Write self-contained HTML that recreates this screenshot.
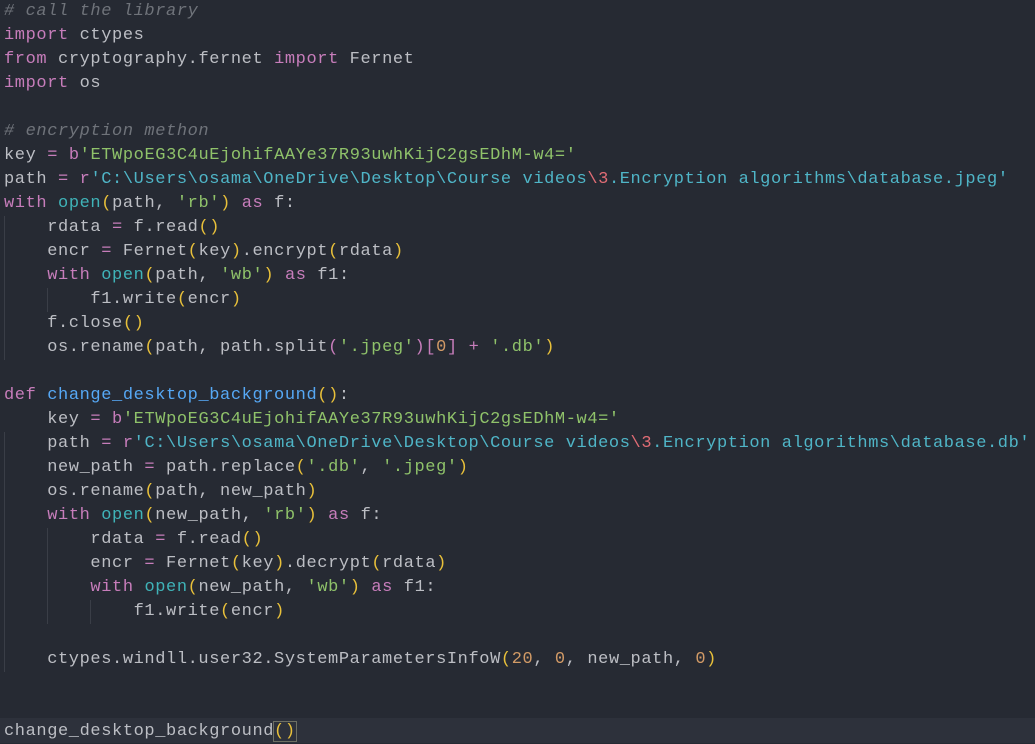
<!DOCTYPE html>
<html><head><meta charset="utf-8"><style>
html,body{margin:0;padding:0;background:#262a33;width:1035px;height:743px;overflow:hidden}
.c{position:absolute;left:4px;top:0px;font-family:"Liberation Mono",monospace;font-size:17px;letter-spacing:0.6px;line-height:24px;color:#bcbec4;white-space:pre}
.cur{position:absolute;left:0;top:718px;width:1035px;height:25px;background:#2d313b}
.g{position:absolute;width:1px;background:#3a3e47}
.cm{color:#6f737a;font-style:italic}
.k{color:#c77dbb}
.s{color:#8fc26a}
.p{color:#4fb5c7}
.e{color:#e06c75}
.f{color:#56a8f5}
.b{color:#3fb3b8}
.y{color:#e8c03a}
.n{color:#d19a66}
.m{outline:1px solid #6d6f63}
</style></head><body>
<div class="cur"></div>
<div class="g" style="left:4px;top:216px;height:144px"></div>
<div class="g" style="left:47px;top:288px;height:24px"></div>
<div class="g" style="left:4px;top:432px;height:240px"></div>
<div class="g" style="left:47px;top:528px;height:96px"></div>
<div class="g" style="left:90px;top:600px;height:24px"></div>
<div class="c"><span class="cm"># call the library</span>
<span class="k">import</span> ctypes
<span class="k">from</span> cryptography.fernet <span class="k">import</span> Fernet
<span class="k">import</span> os

<span class="cm"># encryption methon</span>
key <span class="k">=</span> <span class="k">b</span><span class="s">'ETWpoEG3C4uEjohifAAYe37R93uwhKijC2gsEDhM-w4='</span>
path <span class="k">=</span> <span class="k">r</span><span class="p">'C:\Users\osama\OneDrive\Desktop\Course videos</span><span class="e">\3</span><span class="p">.Encryption algorithms\database.jpeg'</span>
<span class="k">with</span> <span class="b">open</span><span class="y">(</span>path, <span class="s">'rb'</span><span class="y">)</span> <span class="k">as</span> f:
    rdata <span class="k">=</span> f.read<span class="y">()</span>
    encr <span class="k">=</span> Fernet<span class="y">(</span>key<span class="y">)</span>.encrypt<span class="y">(</span>rdata<span class="y">)</span>
    <span class="k">with</span> <span class="b">open</span><span class="y">(</span>path, <span class="s">'wb'</span><span class="y">)</span> <span class="k">as</span> f1:
        f1.write<span class="y">(</span>encr<span class="y">)</span>
    f.close<span class="y">()</span>
    os.rename<span class="y">(</span>path, path.split<span class="k">(</span><span class="s">'.jpeg'</span><span class="k">)</span><span class="k">[</span><span class="n">0</span><span class="k">]</span> <span class="k">+</span> <span class="s">'.db'</span><span class="y">)</span>

<span class="k">def</span> <span class="f">change_desktop_background</span><span class="y">()</span>:
    key <span class="k">=</span> <span class="k">b</span><span class="s">'ETWpoEG3C4uEjohifAAYe37R93uwhKijC2gsEDhM-w4='</span>
    path <span class="k">=</span> <span class="k">r</span><span class="p">'C:\Users\osama\OneDrive\Desktop\Course videos</span><span class="e">\3</span><span class="p">.Encryption algorithms\database.db'</span>
    new_path <span class="k">=</span> path.replace<span class="y">(</span><span class="s">'.db'</span>, <span class="s">'.jpeg'</span><span class="y">)</span>
    os.rename<span class="y">(</span>path, new_path<span class="y">)</span>
    <span class="k">with</span> <span class="b">open</span><span class="y">(</span>new_path, <span class="s">'rb'</span><span class="y">)</span> <span class="k">as</span> f:
        rdata <span class="k">=</span> f.read<span class="y">()</span>
        encr <span class="k">=</span> Fernet<span class="y">(</span>key<span class="y">)</span>.decrypt<span class="y">(</span>rdata<span class="y">)</span>
        <span class="k">with</span> <span class="b">open</span><span class="y">(</span>new_path, <span class="s">'wb'</span><span class="y">)</span> <span class="k">as</span> f1:
            f1.write<span class="y">(</span>encr<span class="y">)</span>

    ctypes.windll.user32.SystemParametersInfoW<span class="y">(</span><span class="n">20</span>, <span class="n">0</span>, new_path, <span class="n">0</span><span class="y">)</span>


change_desktop_background<span class="y m">()</span></div>
</body></html>
